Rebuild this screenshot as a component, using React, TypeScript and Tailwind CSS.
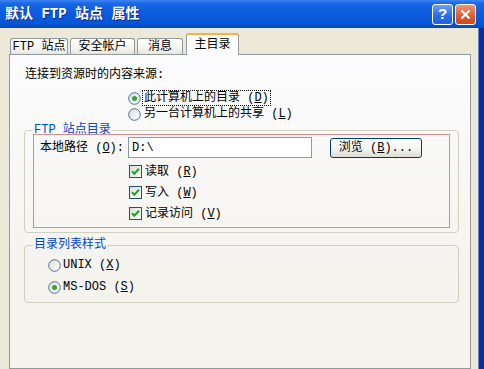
import type { ReactNode } from "react";

const FONT = "font-['Liberation_Mono','Noto_Sans_CJK_SC',monospace]";

function Radio({ checked }: { checked?: boolean }) {
  return (
    <svg width="13" height="13" viewBox="0 0 13 13" className="shrink-0">
      <defs>
        <linearGradient id="rb" x1="0" y1="0" x2="1" y2="1">
          <stop offset="0" stopColor="#dcdcd7" />
          <stop offset="1" stopColor="#ffffff" />
        </linearGradient>
      </defs>
      <circle cx="6.5" cy="6.5" r="5.8" fill="url(#rb)" stroke="#4a6f9c" strokeWidth="1" />
      {checked && <circle cx="6.5" cy="6.5" r="2.5" fill="#36a636" />}
    </svg>
  );
}

function Check() {
  return (
    <svg width="13" height="13" viewBox="0 0 13 13" className="shrink-0">
      <defs>
        <linearGradient id="cb" x1="0" y1="0" x2="1" y2="1">
          <stop offset="0" stopColor="#dcdcd7" />
          <stop offset="1" stopColor="#ffffff" />
        </linearGradient>
      </defs>
      <rect x="0.5" y="0.5" width="12" height="12" fill="url(#cb)" stroke="#1c5180" />
      <path d="M3 6.3 L5.3 8.7 L10 3.8" fill="none" stroke="#21a121" strokeWidth="2" />
    </svg>
  );
}

function Tab({ children, active, w }: { children: ReactNode; active?: boolean; w: string }) {
  if (active) {
    return (
      <div
        className={`relative z-10 -mb-px ml-px flex h-[22px] items-start justify-center rounded-t-[3px] border-x border-t-2 border-x-[#919b9c] border-t-[#f5b344] bg-[#fcfcfe] pt-[2px] ${w}`}
      >
        {children}
      </div>
    );
  }
  return (
    <div
      className={`flex h-[16px] items-center justify-center rounded-t-[3px] border border-b-0 border-[#919b9c] bg-[linear-gradient(to_bottom,#ffffff,#f2f1ec_70%,#e6e5de)] ${w}`}
    >
      {children}
    </div>
  );
}

export default function App() {
  return (
    <div
      className={`flex h-[369px] w-[484px] flex-col overflow-hidden bg-[#ece9d8] text-[12px] leading-[16px] text-black ${FONT}`}
    >
      {/* 제목 표시줄 */}
      <div className="flex h-[28px] shrink-0 items-center bg-[linear-gradient(to_bottom,#3d85f2_0%,#1a68e6_12%,#0b5bdc_45%,#0756d6_85%,#0548bf_100%)] pl-[5px] pr-[8px]">
        <span className="flex-1 text-[14px] font-bold text-white [text-shadow:1px_1px_#0b2a8a]">
          默认 FTP 站点 属性
        </span>
        <div className="flex gap-[2px]">
          <div className="flex h-[21px] w-[21px] items-center justify-center rounded-[3px] border border-white bg-[linear-gradient(to_bottom,#6aa0f6,#2a6ae6_60%,#2262dc)] text-[15px] font-bold text-white font-['Liberation_Sans',sans-serif]">
            ?
          </div>
          <div className="flex h-[21px] w-[21px] items-center justify-center rounded-[3px] border border-white bg-[linear-gradient(to_bottom,#f09474,#e0592f_60%,#cc4820)]">
            <svg width="11" height="11" viewBox="0 0 11 11">
              <path d="M1.5 1.5 L9.5 9.5 M9.5 1.5 L1.5 9.5" stroke="#ffffff" strokeWidth="2" />
            </svg>
          </div>
        </div>
      </div>

      <div className="flex min-h-0 flex-1">
        <div className="flex min-w-0 flex-1 flex-col pl-[9px]">
          {/* 탭 */}
          <div className="flex h-[26px] shrink-0 items-end gap-[2px] pl-px">
            <Tab w="w-[58px]">FTP 站点</Tab>
            <Tab w="w-[65px]">安全帐户</Tab>
            <Tab w="w-[46px]">消息</Tab>
            <Tab w="w-[53px]" active>
              主目录
            </Tab>
          </div>

          {/* 탭 패널 */}
          <div className="flex-1 border border-[#919b9c] bg-[linear-gradient(to_bottom,#fcfcfe,#f4f3ee_70%)] pl-[14px] pr-[11px] pt-[12px]">
            <div className="ml-px">连接到资源时的内容来源:</div>

            <div className="mt-[7px] flex flex-col pl-[104px]">
              <div className="flex h-[16px] items-center gap-[1px]">
                <Radio checked />
                <span className="border border-dotted border-black px-px leading-[14px]">
                  此计算机上的目录 (<u>D</u>)
                </span>
              </div>
              <div className="flex h-[16px] items-center gap-[3px]">
                <Radio />
                <span>
                  另一台计算机上的共享 (<u>L</u>)
                </span>
              </div>
            </div>

            {/* FTP 站点目录 */}
            <fieldset className="mt-[2px] rounded-[4px] border border-[#d0d0bf] px-[8px] pb-[4px]">
              <legend className="px-px leading-[12px] text-[#0046d5]">FTP 站点目录</legend>
              <div className="-mt-[2px] border border-[#d48c8c] pb-[3px]">
                <div className="mt-[2px] flex items-center pl-[6px]">
                  <span className="w-[88px]">
                    本地路径 (<u>O</u>):
                  </span>
                  <div className="flex h-[21px] w-[184px] items-center border border-[#7f9db9] bg-white pl-[3px]">
                    {"D:\\"}
                  </div>
                  <div className="ml-[18px] flex h-[20px] w-[92px] items-center justify-center rounded-[3px] border border-[#003c74] bg-[linear-gradient(to_bottom,#ffffff,#f3f3ef_60%,#dcdcd2)]">
                    浏览 (<u>B</u>)...
                  </div>
                </div>
                <div className="mt-[3px] flex flex-col pl-[95px]">
                  <div className="flex h-[21px] items-center gap-[3px]">
                    <Check />
                    <span>
                      读取 (<u>R</u>)
                    </span>
                  </div>
                  <div className="flex h-[21px] items-center gap-[3px]">
                    <Check />
                    <span>
                      写入 (<u>W</u>)
                    </span>
                  </div>
                  <div className="flex h-[21px] items-center gap-[3px]">
                    <Check />
                    <span>
                      记录访问 (<u>V</u>)
                    </span>
                  </div>
                </div>
              </div>
            </fieldset>

            {/* 目录列表样式 */}
            <fieldset className="mt-[6px] rounded-[4px] border border-[#d0d0bf] px-[8px] pb-[4px]">
              <legend className="px-px leading-[12px] text-[#0046d5]">目录列表样式</legend>
              <div className="mt-[3px] flex flex-col pl-[15px]">
                <div className="flex h-[22px] items-center gap-[2px]">
                  <Radio />
                  <span>
                    UNIX (<u>X</u>)
                  </span>
                </div>
                <div className="flex h-[22px] items-center gap-[2px]">
                  <Radio checked />
                  <span>
                    MS-DOS (<u>S</u>)
                  </span>
                </div>
              </div>
            </fieldset>
          </div>
        </div>
        <div className="w-[7px] shrink-0" />
        <div className="w-[6px] shrink-0 border-l border-[#6d86c9] bg-[#0c2e9c]" />
      </div>
    </div>
  );
}
